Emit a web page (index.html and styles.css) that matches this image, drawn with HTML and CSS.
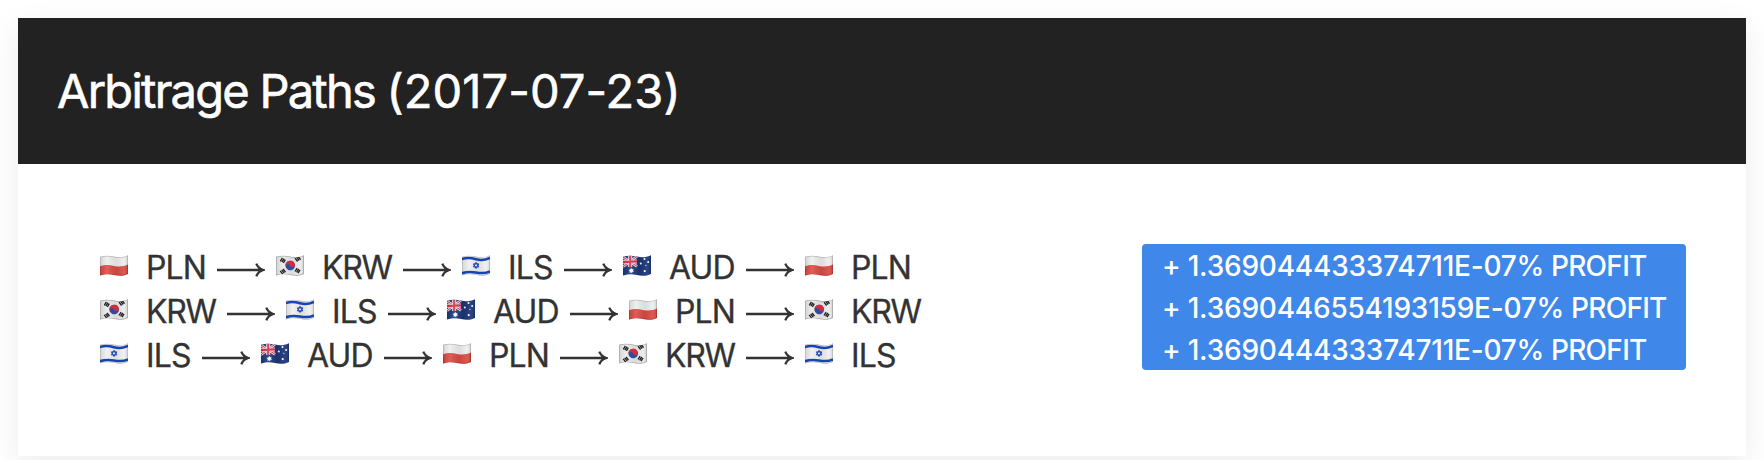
FILE: index.html
```html
<!DOCTYPE html>
<html lang="en">
<head>
<meta charset="utf-8">
<title>Arbitrage Paths</title>
<link rel="stylesheet" href="styles.css">
</head>
<body>
<svg class="defs" width="0" height="0" aria-hidden="true">
  <defs>
    <clipPath id="wave"><path d="M0 1.8C5 .2 9 .4 14 1.6S23 2.4 28 .2V18.9C23 21.2 19 21 14 20S5 19.1 0 20.6Z"/></clipPath>
    <linearGradient id="shade" x1="0" x2="1" y1="0" y2="0">
      <stop offset="0" stop-color="#000" stop-opacity=".1"/>
      <stop offset=".25" stop-color="#fff" stop-opacity=".12"/>
      <stop offset=".6" stop-color="#000" stop-opacity=".07"/>
      <stop offset=".85" stop-color="#fff" stop-opacity=".08"/>
      <stop offset="1" stop-color="#000" stop-opacity=".12"/>
    </linearGradient>
    <symbol id="pln" viewBox="0 0 28 21">
      <g clip-path="url(#wave)">
        <path fill="#eee" d="M0 0H28V21H0Z"/>
        <path fill="#dc4a43" d="M0 11.2C5 9.6 9 9.8 14 10.9S23 11.6 28 9.5V21H0Z"/>
        <path fill="url(#shade)" d="M0 0H28V21H0Z"/>
        <path fill="none" stroke="#000" stroke-opacity=".2" stroke-width="1.4" d="M0 1.8C5 .2 9 .4 14 1.6S23 2.4 28 .2V18.9C23 21.2 19 21 14 20S5 19.1 0 20.6Z"/>
      </g>
    </symbol>
    <symbol id="krw" viewBox="0 0 28 21">
      <g clip-path="url(#wave)">
        <path fill="#ececec" d="M0 0H28V21H0Z"/>
        <path fill="url(#shade)" d="M0 0H28V21H0Z"/>
        <g transform="rotate(-22 14.2 10.5)">
          <circle cx="14.2" cy="10.5" r="4.8" fill="#2f4d9b"/>
          <path fill="#d52b3c" d="M9.4 10.5a4.8 4.8 0 0 1 9.6 0a2.4 2.4 0 0 1-4.8 0a2.4 2.4 0 0 0-4.8 0Z"/>
        </g>
        <g stroke="#222" stroke-width="1.35">
          <path d="M4.3 6.3L6.4 2.9M5.9 7.1L8 3.7M7.4 7.9L9.3 4.7"/>
          <path d="M19 3.1L21.6 6.5M20.6 2.1L23.2 5.5M22.1 1.3L24.6 4.6"/>
          <path d="M4.2 15.9L6.7 19.1M5.7 14.9L8.2 18.1M7.1 14L9.5 17.1"/>
          <path d="M19 16.5L21.1 13.1M20.6 17.3L22.7 13.9M22.1 18.1L24 14.9"/>
        </g>
        <path fill="none" stroke="#000" stroke-opacity=".25" stroke-width="1.4" d="M0 1.8C5 .2 9 .4 14 1.6S23 2.4 28 .2V18.9C23 21.2 19 21 14 20S5 19.1 0 20.6Z"/>
      </g>
    </symbol>
    <symbol id="ils" viewBox="0 0 28 21">
      <g clip-path="url(#wave)">
        <path fill="#f0f0f0" d="M0 0H28V21H0Z"/>
        <path fill="url(#shade)" d="M0 0H28V21H0Z"/>
        <g fill="none" stroke="#1743b4">
          <path stroke-width="2.6" d="M0 4C5 2.4 9 2.8 14 4.2S23 5.2 28 2.9M0 18.2C5 16.6 9 16.6 14 17.5S23 18.8 28 16.4"/>
          <path stroke-width="1" d="M14.1 7.3L16.8 11.9H11.4ZM14.1 13.5L11.4 8.9H16.8Z"/>
        </g>
        <path fill="none" stroke="#000" stroke-opacity=".2" stroke-width="1.2" d="M0 1.8C5 .2 9 .4 14 1.6S23 2.4 28 .2V18.9C23 21.2 19 21 14 20S5 19.1 0 20.6Z"/>
      </g>
    </symbol>
    <symbol id="aud" viewBox="0 0 28 21">
      <g clip-path="url(#wave)">
        <path fill="#1b3678" d="M0 0H28V21H0Z"/>
        <path stroke="#f3e6ea" stroke-width="2.6" d="M0 2L14 11.3M0 11.8L14 1.3"/>
        <path stroke="#d8304a" stroke-width="1" d="M0 2L14 11.3M0 11.8L14 1.3"/>
        <path stroke="#f3e6ea" stroke-width="4" d="M7.2 0V12M0 6.8L14 6.4"/>
        <path stroke="#d8304a" stroke-width="2.2" d="M7.2 0V12M0 6.8L14 6.4"/>
        <g fill="#fff">
          <path d="M8.3 12.7L9 14.3L10.7 13.8L9.9 15.3L11.2 16.5L9.4 16.7L9.1 18.5L8 17.2L6.4 17.8L6.8 16.1L5.5 14.9L7.3 14.6Z"/>
          <circle cx="21.5" cy="3.9" r="1"/><circle cx="17.8" cy="8.5" r="1"/>
          <circle cx="25.2" cy="7" r="1"/><circle cx="22.9" cy="10.3" r=".6"/><circle cx="21.7" cy="16.1" r="1.1"/>
        </g>
        <path fill="url(#shade)" d="M0 0H28V21H0Z"/>
      </g>
    </symbol>
    <symbol id="arrow" viewBox="0 0 48 14">
      <path fill="none" stroke="#333" stroke-width="2.3" d="M0 7H45.5M39.3 .7C40.5 3.8 43 6 46.3 7C43 8 40.5 10.2 39.3 13.3"/>
    </symbol>
  </defs>
</svg>
<section class="card">
  <header class="card-header"><h1 class="card-title">Arbitrage Paths <span class="date">(2017-07-23)</span></h1></header>
  <div class="card-body">
    <div class="paths">
      <div class="path">
        <svg class="flag"><use href="#pln"/></svg><span class="code pln">PLN</span><svg class="arrow"><use href="#arrow"/></svg>
        <svg class="flag"><use href="#krw"/></svg><span class="code krw">KRW</span><svg class="arrow"><use href="#arrow"/></svg>
        <svg class="flag"><use href="#ils"/></svg><span class="code ils">ILS</span><svg class="arrow"><use href="#arrow"/></svg>
        <svg class="flag"><use href="#aud"/></svg><span class="code aud">AUD</span><svg class="arrow"><use href="#arrow"/></svg>
        <svg class="flag"><use href="#pln"/></svg><span class="code pln">PLN</span>
      </div>
      <div class="path">
        <svg class="flag"><use href="#krw"/></svg><span class="code krw">KRW</span><svg class="arrow"><use href="#arrow"/></svg>
        <svg class="flag"><use href="#ils"/></svg><span class="code ils">ILS</span><svg class="arrow"><use href="#arrow"/></svg>
        <svg class="flag"><use href="#aud"/></svg><span class="code aud">AUD</span><svg class="arrow"><use href="#arrow"/></svg>
        <svg class="flag"><use href="#pln"/></svg><span class="code pln">PLN</span><svg class="arrow"><use href="#arrow"/></svg>
        <svg class="flag"><use href="#krw"/></svg><span class="code krw">KRW</span>
      </div>
      <div class="path">
        <svg class="flag"><use href="#ils"/></svg><span class="code ils">ILS</span><svg class="arrow"><use href="#arrow"/></svg>
        <svg class="flag"><use href="#aud"/></svg><span class="code aud">AUD</span><svg class="arrow"><use href="#arrow"/></svg>
        <svg class="flag"><use href="#pln"/></svg><span class="code pln">PLN</span><svg class="arrow"><use href="#arrow"/></svg>
        <svg class="flag"><use href="#krw"/></svg><span class="code krw">KRW</span><svg class="arrow"><use href="#arrow"/></svg>
        <svg class="flag"><use href="#ils"/></svg><span class="code ils">ILS</span>
      </div>
    </div>
    <div class="profits">
      <div><span class="amount">+ 1.369044433374711E-07%</span> PROFIT</div>
      <div><span class="amount">+ 1.3690446554193159E-07%</span> PROFIT</div>
      <div><span class="amount">+ 1.369044433374711E-07%</span> PROFIT</div>
    </div>
  </div>
</section>
</body>
</html>
```
FILE: styles.css
```css
* { box-sizing: border-box; }
body {
  margin: 0;
  padding: 18px;
  height: 460px;
  overflow: hidden;
  background: #fff;
  color: #333;
  font-family: Inter, "Liberation Sans", sans-serif;
}
.defs { position: absolute; }
.card {
  height: 438px;
  background: #fff;
  box-shadow: 0 10px 30px rgba(0, 0, 0, .08);
}
.card-header {
  height: 146px;
  padding: 40px 39px;
  background: #222;
}
.card-title {
  margin: 0;
  color: #fff;
  font-size: 47px;
  font-weight: 400;
  line-height: 66px;
  letter-spacing: -1.75px;
  white-space: nowrap;
  -webkit-text-stroke: .6px #fff;
}
.date { letter-spacing: .1px; }
.card-body {
  display: flex;
  justify-content: space-between;
  align-items: flex-start;
  padding: 80px 60px 0 82px;
}
.paths { padding-top: 1px; }
.path {
  display: flex;
  align-items: center;
  height: 44px;
}
.flag {
  flex: none;
  width: 28px;
  height: 21px;
  margin: 0 18px 3px 0;
}
.code {
  flex: none;
  padding-top: 1px;
  font-size: 32px;
  line-height: 43px;
  letter-spacing: -.9px;
  white-space: nowrap;
  -webkit-text-stroke: .3px #333;
}
.pln { width: 71px; }
.krw { width: 81px; letter-spacing: -1.3px; }
.ils { width: 56px; }
.aud { width: 77px; }
.arrow {
  flex: none;
  width: 48px;
  height: 14px;
  margin: 5px 11px 0 0;
}
.profits {
  width: 544px;
  height: 126px;
  padding: 1px 0 0 20px;
  border-radius: 4px;
  background: #3f87e9;
  color: #fff;
  font-size: 28px;
  font-weight: 500;
  line-height: 42px;
  letter-spacing: -.7px;
  white-space: nowrap;
}
.amount { letter-spacing: -.22px; }
```
